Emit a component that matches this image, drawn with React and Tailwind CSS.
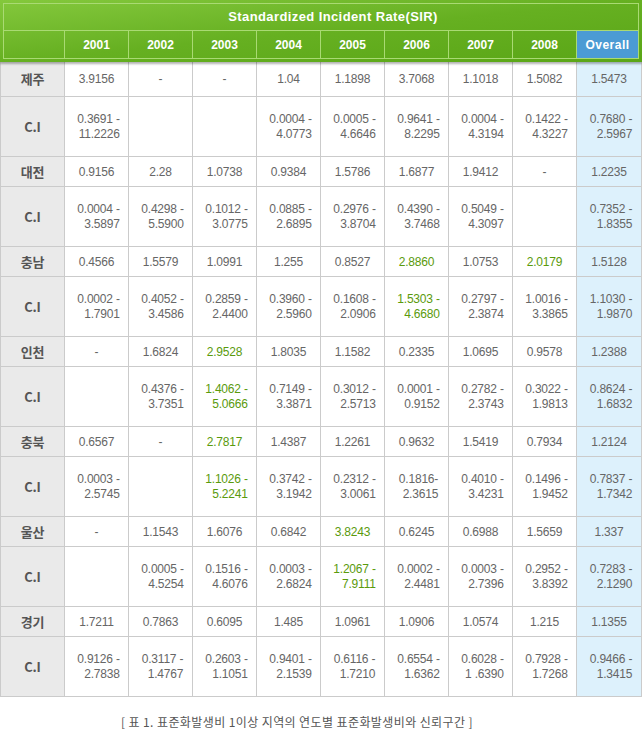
const years = ['2001', '2002', '2003', '2004', '2005', '2006', '2007', '2008']

// "!" marks a highlighted (green) value, "|" splits a C.I range onto two lines
const regions = [
  {
    name: '제주',
    sir: ['3.9156', '-', '-', '1.04', '1.1898', '3.7068', '1.1018', '1.5082', '1.5473'],
    ci: ['0.3691 -|11.2226', '', '', '0.0004 -|4.0773', '0.0005 -|4.6646', '0.9641 -|8.2295', '0.0004 -|4.3194', '0.1422 -|4.3227', '0.7680 -|2.5967'],
  },
  {
    name: '대전',
    sir: ['0.9156', '2.28', '1.0738', '0.9384', '1.5786', '1.6877', '1.9412', '-', '1.2235'],
    ci: ['0.0004 -|3.5897', '0.4298 -|5.5900', '0.1012 -|3.0775', '0.0885 -|2.6895', '0.2976 -|3.8704', '0.4390 -|3.7468', '0.5049 -|4.3097', '', '0.7352 -|1.8355'],
  },
  {
    name: '충남',
    sir: ['0.4566', '1.5579', '1.0991', '1.255', '0.8527', '!2.8860', '1.0753', '!2.0179', '1.5128'],
    ci: ['0.0002 -|1.7901', '0.4052 -|3.4586', '0.2859 -|2.4400', '0.3960 -|2.5960', '0.1608 -|2.0906', '!1.5303 -|4.6680', '0.2797 -|2.3874', '1.0016 -|3.3865', '1.1030 -|1.9870'],
  },
  {
    name: '인천',
    sir: ['-', '1.6824', '!2.9528', '1.8035', '1.1582', '0.2335', '1.0695', '0.9578', '1.2388'],
    ci: ['', '0.4376 -|3.7351', '!1.4062 -|5.0666', '0.7149 -|3.3871', '0.3012 -|2.5713', '0.0001 -|0.9152', '0.2782 -|2.3743', '0.3022 -|1.9813', '0.8624 -|1.6832'],
  },
  {
    name: '충북',
    sir: ['0.6567', '-', '!2.7817', '1.4387', '1.2261', '0.9632', '1.5419', '0.7934', '1.2124'],
    ci: ['0.0003 -|2.5745', '', '!1.1026 -|5.2241', '0.3742 -|3.1942', '0.2312 -|3.0061', '0.1816-|2.3615', '0.4010 -|3.4231', '0.1496 -|1.9452', '0.7837 -|1.7342'],
  },
  {
    name: '울산',
    sir: ['-', '1.1543', '1.6076', '0.6842', '!3.8243', '0.6245', '0.6988', '1.5659', '1.337'],
    ci: ['', '0.0005 -|4.5254', '0.1516 -|4.6076', '0.0003 -|2.6824', '!1.2067 -|7.9111', '0.0002 -|2.4481', '0.0003 -|2.7396', '0.2952 -|3.8392', '0.7283 -|2.1290'],
  },
  {
    name: '경기',
    sir: ['1.7211', '0.7863', '0.6095', '1.485', '1.0961', '1.0906', '1.0574', '1.215', '1.1355'],
    ci: ['0.9126 -|2.7838', '0.3117 -|1.4767', '0.2603 -|1.1051', '0.9401 -|2.1539', '0.6116 -|1.7210', '0.6554 -|1.6362', '0.6028 -|1 .6390', '0.7928 -|1.7268', '0.9466 -|1.3415'],
  },
]

const rowGrid = 'grid grid-cols-[64px_repeat(8,64px)_1fr] border-b border-[#cbcbcb]'

function Label({ children }) {
  return (
    <div className="flex items-center justify-center bg-[#eaeaea] border-r border-[#cbcbcb] font-['Noto_Sans_CJK_KR','Liberation_Sans',sans-serif] text-[13px] font-bold text-[#555]">
      {children}
    </div>
  )
}

function Cell({ value, last }) {
  const green = value.startsWith('!')
  const text = green ? value.slice(1) : value
  const [a, b] = text.split('|')

  return (
    <div
      className={`flex items-center justify-center ${last ? 'bg-[#ddf1fc]' : 'border-r border-[#cbcbcb]'} ${green ? 'text-[#5a9a0c]' : 'text-[#666]'}`}
    >
      {b !== undefined ? (
        <span className="inline-block text-right leading-[15px] pl-[4px]">
          {a}
          <br />
          {b}
        </span>
      ) : (
        <span>{a}</span>
      )}
    </div>
  )
}

export default function App() {
  return (
    <div className="w-[642px] bg-white font-['Liberation_Sans',sans-serif] text-[12px] tracking-[-0.2px]">
      {/* green title block */}
      <div className="relative z-10 h-[62px] bg-gradient-to-br from-[#84c83c] via-[#66b021] to-[#5aa616] px-[3px] pt-[3px] shadow-[0_2px_2px_rgba(0,0,0,0.3)]">
        <div className="border border-[#a9da73] text-white font-bold tracking-normal">
          <div className="flex h-[27px] items-center justify-center border-b border-[#a9da73] pl-[24px] text-[13px] tracking-[0.4px]">
            Standardized Incident Rate(SIR)
          </div>
          <div className="grid h-[27px] grid-cols-[61px_repeat(8,64px)_1fr]">
            <div className="border-r border-[#a9da73]" />
            {years.map((y) => (
              <div key={y} className="flex items-center justify-center border-r border-[#a9da73]">
                {y}
              </div>
            ))}
            <div className="flex items-center justify-center bg-[#4b9bd4] tracking-[0.5px]">Overall</div>
          </div>
        </div>
      </div>

      {/* data rows */}
      <div className="border-l border-r border-[#cbcbcb]">
        {regions.map((r, i) => (
          <div key={r.name}>
            <div className={`${rowGrid} ${i === 0 ? 'h-[35px]' : 'h-[30px]'}`}>
              <Label>{r.name}</Label>
              {r.sir.map((v, j) => (
                <Cell key={j} value={v} last={j === 8} />
              ))}
            </div>
            <div className={`${rowGrid} h-[60px]`}>
              <Label>C.I</Label>
              {r.ci.map((v, j) => (
                <Cell key={j} value={v} last={j === 8} />
              ))}
            </div>
          </div>
        ))}
      </div>

      <p className="w-[594px] pt-[16px] pb-[6px] text-center font-['Noto_Sans_CJK_KR',sans-serif] text-[12px] tracking-[0.4px] text-[#555]">
        [ 표 1. 표준화발생비 1이상 지역의 연도별 표준화발생비와 신뢰구간 ]
      </p>
    </div>
  )
}
